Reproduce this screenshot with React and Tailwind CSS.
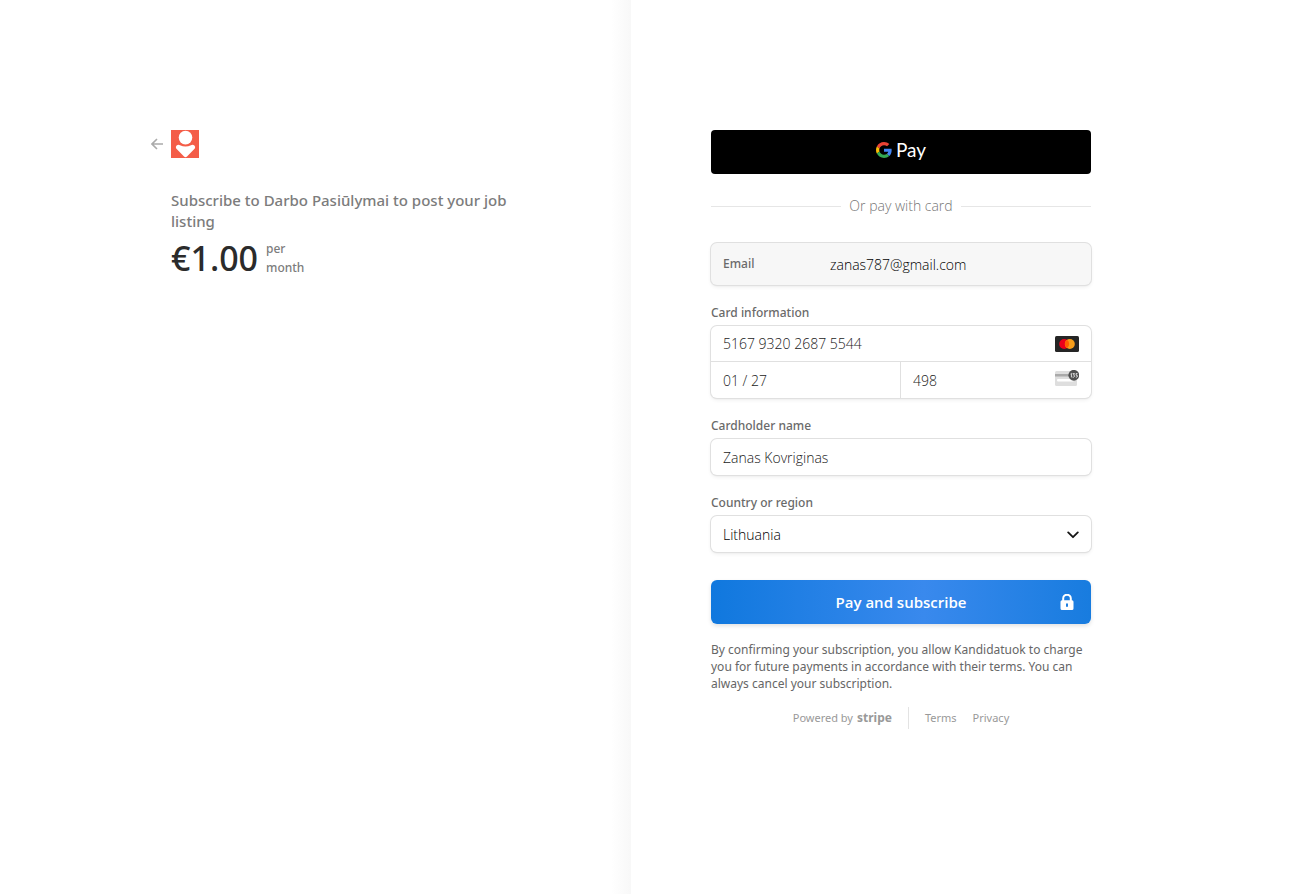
import { useState } from "react"

const field = "shadow-[0_0_0_1px_#e0e0e0,0_2px_4px_0_rgba(0,0,0,0.07),0_1px_2px_0_rgba(0,0,0,0.05)]"
const input = "h-9 w-full bg-transparent px-3 text-[14px] font-light text-[#1a1a1a] focus:outline-none"
const label = "mt-5 mb-[5px] block font-['Noto_Sans'] text-[12px] leading-4 font-medium text-[#6a6a6a]"

const BackArrow = () => (
  <svg width="12" height="12" viewBox="0 0 12 12" fill="none" stroke="#ababab" strokeWidth="1.6">
    <path d="M6 1L1 6L6 11M1 6H12" />
  </svg>
)

const Logo = () => (
  <svg width="28" height="28" viewBox="0 0 28 28">
    <rect width="28" height="28" fill="#f45d48" />
    <circle cx="14.5" cy="7.6" r="6.8" fill="#fff" />
    <path d="M5.6 15.6Q7.2 14.2 9 15.2Q14.5 17.6 20 15.2Q21.8 14.2 23.4 15.6Q24.8 17.2 23.8 18.4L16 26.6Q14.5 28 13 26.6L5.2 18.4Q4.2 17.2 5.6 15.6Z" fill="#fff" />
  </svg>
)

const GoogleG = () => (
  <svg width="16" height="16" viewBox="0 0 48 48">
    <path fill="#EA4335" d="M24 9.5c3.54 0 6.71 1.22 9.21 3.6l6.85-6.85C35.9 2.38 30.47 0 24 0 14.62 0 6.51 5.38 2.56 13.22l7.98 6.19C12.43 13.72 17.74 9.5 24 9.5z" />
    <path fill="#4285F4" d="M46.98 24.55c0-1.57-.15-3.09-.38-4.55H24v9.02h12.94c-.58 2.96-2.26 5.48-4.78 7.18l7.73 6c4.51-4.18 7.09-10.36 7.09-17.65z" />
    <path fill="#FBBC05" d="M10.53 28.59c-.48-1.45-.76-2.99-.76-4.59s.27-3.14.76-4.59l-7.98-6.19C.92 16.46 0 20.12 0 24c0 3.88.92 7.54 2.56 10.78l7.97-6.19z" />
    <path fill="#34A853" d="M24 48c6.48 0 11.93-2.13 15.89-5.81l-7.73-6c-2.15 1.45-4.92 2.3-8.16 2.3-6.26 0-11.57-4.22-13.47-9.91l-7.98 6.19C6.51 42.62 14.62 48 24 48z" />
  </svg>
)

const Mastercard = () => (
  <svg className="mr-3 shrink-0" width="24" height="16" viewBox="0 0 24 16">
    <rect width="24" height="16" rx="1.5" fill="#252525" />
    <circle cx="9.2" cy="8" r="5" fill="#eb001b" />
    <circle cx="14.8" cy="8" r="5" fill="#f79e1b" />
    <path d="M12 3.86a5 5 0 0 1 0 8.28a5 5 0 0 1 0-8.28z" fill="#ff5f00" />
  </svg>
)

const CvcCard = () => (
  <svg className="mr-3 shrink-0" width="24" height="20" viewBox="0 0 24 20">
    <rect y="1" width="22" height="15" rx="1.5" fill="#dedede" />
    <rect y="4" width="22" height="2.5" fill="#aaa" />
    <rect x="2" y="9" width="17" height="2.5" rx="1" fill="#fff" />
    <circle cx="18.8" cy="5.3" r="5.4" fill="#4f4f4f" />
    <path d="M15.6 4L16.4 3.4V7.4M17.6 3.6H19.5L18.5 5.1Q19.8 5.3 19.6 6.4Q19 7.5 17.5 7.1M22.5 3.6H21.1V5.2Q22.6 5 22.5 6.3Q22.1 7.5 20.8 7.1" fill="none" stroke="#fff" strokeWidth="0.8" />
  </svg>
)

const Chevron = () => (
  <svg className="pointer-events-none absolute top-3 right-3" width="12" height="12" viewBox="0 0 12 12" fill="none" stroke="#151515" strokeWidth="1.8" strokeLinecap="round" strokeLinejoin="round">
    <path d="M1.2 4.4L6 9.2L10.8 4.4" />
  </svg>
)

const Lock = () => (
  <svg className="absolute top-[14px] right-[17px]" width="14" height="16" viewBox="0 0 14 16">
    <path d="M3.2 7V4.5a3.8 3.8 0 0 1 7.6 0V7" fill="none" stroke="#fff" strokeWidth="2" />
    <path fill="#fff" fillRule="evenodd" d="M2 6.3H12a1.5 1.5 0 0 1 1.5 1.5V14.5A1.5 1.5 0 0 1 12 16H2A1.5 1.5 0 0 1 .5 14.5V7.8A1.5 1.5 0 0 1 2 6.3ZM7 9.2a1 1 0 0 0-1 1V12a1 1 0 0 0 2 0V10.2a1 1 0 0 0-1-1Z" />
  </svg>
)

const Summary = () => (
  <section className="w-full max-w-[380px] font-['Noto_Sans']">
    <div className="-ml-5 flex items-center gap-2">
      <a href="#back" aria-label="Back"><BackArrow /></a>
      <Logo />
    </div>
    <h1 className="mt-8 max-w-[360px] text-[15px] leading-[21px] font-medium text-[#7c7c7c]">
      Subscribe to Darbo Pasiūlymai to post your job listing
    </h1>
    <div className="mt-0.5 flex items-center gap-2">
      <span className="text-[34px] leading-[48px] font-medium text-[#2b2b2b]">€1.00</span>
      <span className="w-12 text-[12px] leading-[19px] font-medium text-[#7c7c7c]">per month</span>
    </div>
  </section>
)

const PaymentForm = () => {
  const [card, setCard] = useState("5167 9320 2687 5544")
  const [expiry, setExpiry] = useState("01 / 27")
  const [cvc, setCvc] = useState("498")
  const [name, setName] = useState("Zanas Kovriginas")

  return (
    <form className="w-full max-w-[380px]" onSubmit={(e) => e.preventDefault()}>
      <button type="button" className="flex h-11 w-full items-center justify-center gap-1 rounded bg-black pb-1 text-white">
        <GoogleG />
        <span className="font-['Lato'] text-[19px] leading-6">Pay</span>
      </button>

      <div className="mt-[22px] flex items-center gap-2 text-[14px] leading-5 font-light text-[#767676]">
        <div className="h-px flex-1 bg-[#e6e6e6]" />
        Or pay with card
        <div className="h-px flex-1 bg-[#e6e6e6]" />
      </div>

      <div className={`mt-[27px] flex h-[42px] items-center rounded-md bg-[#f7f7f7] px-3 ${field}`}>
        <label htmlFor="email" className="w-[107px] font-['Noto_Sans'] text-[12px] leading-4 font-medium text-[#6a6a6a]">Email</label>
        <input id="email" readOnly value="zanas787@gmail.com" className="min-w-0 flex-1 text-[14px] font-light text-black focus:outline-none" />
      </div>

      <label htmlFor="card" className={label}>Card information</label>
      <div className={`rounded-md bg-white ${field}`}>
        <div className="flex h-9 items-center border-b border-[#e0e0e0]">
          <input id="card" value={card} onChange={(e) => setCard(e.target.value)} className={input} />
          <Mastercard />
        </div>
        <div className="grid h-9 grid-cols-2">
          <div className="border-r border-[#e0e0e0]">
            <input aria-label="Expiry" value={expiry} onChange={(e) => setExpiry(e.target.value)} className={input} />
          </div>
          <div className="flex items-center">
            <input aria-label="CVC" value={cvc} onChange={(e) => setCvc(e.target.value)} className={input} />
            <CvcCard />
          </div>
        </div>
      </div>

      <label htmlFor="name" className={label}>Cardholder name</label>
      <div className={`rounded-md bg-white ${field}`}>
        <input id="name" value={name} onChange={(e) => setName(e.target.value)} className={`block ${input}`} />
      </div>

      <label htmlFor="country" className={label}>Country or region</label>
      <div className={`relative rounded-md bg-white ${field}`}>
        <select id="country" className="block h-9 w-full appearance-none px-3 text-[14px] font-light text-black focus:outline-none">
          <option>Lithuania</option>
        </select>
        <Chevron />
      </div>

      <button type="submit" className="relative mt-7 h-11 w-full rounded-md bg-[linear-gradient(90deg,#1078de_0%,#3989ed_56%,#187cdf_100%)] text-[15px] font-semibold text-white shadow-[0_2px_4px_0_rgba(0,0,0,0.12)]">
        Pay and subscribe
        <Lock />
      </button>

      <p className="mt-[17px] font-['Noto_Sans'] text-[12px] leading-[17px] text-[#666]">
        By confirming your subscription, you allow Kandidatuok to charge you for future payments in accordance with their terms. You can always cancel your subscription.
      </p>

      <footer className="mt-[15px] flex h-[22px] items-center justify-center gap-4 font-['Noto_Sans'] text-[11px] text-[#999]">
        <a href="#stripe" className="flex items-center gap-1">
          Powered by
          <span className="text-[12px] leading-4 font-bold">stripe</span>
        </a>
        <div className="h-full w-px bg-[#e3e3e3]" />
        <a href="#terms">Terms</a>
        <a href="#privacy">Privacy</a>
      </footer>
    </form>
  )
}

const App = () => {
  return (
    <div className="min-h-screen bg-white pr-7 font-['Open_Sans','Noto_Sans',sans-serif]">
      <div className="grid min-h-screen grid-cols-2">
        <div className="flex justify-end bg-[linear-gradient(to_left,#f8f8f8,#fff_20px)] pt-[130px] pr-20">
          <Summary />
        </div>
        <div className="pt-[130px] pl-20">
          <PaymentForm />
        </div>
      </div>
    </div>
  )
}

export default App
